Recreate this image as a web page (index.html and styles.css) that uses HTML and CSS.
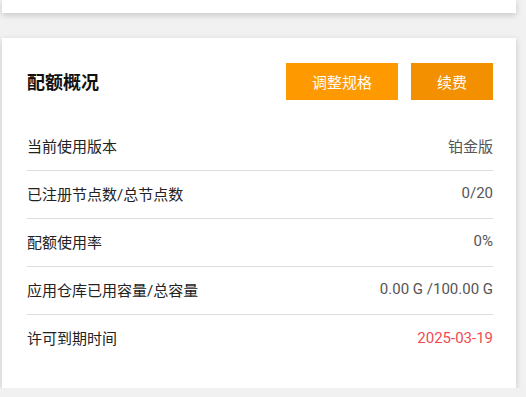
FILE: index.html
```html
<!DOCTYPE html>
<html lang="zh-CN">
<head>
    <meta charset="UTF-8">
    <meta name="viewport" content="width=device-width, initial-scale=1.0">
    <title>配额概况</title>
    <link rel="stylesheet" href="styles.css">
</head>
<body>
    <div class="card card-top"></div>

    <div class="card quota">
        <div class="quota-header">
            <h3>配额概况</h3>
            <div class="actions">
                <button class="btn btn-primary">调整规格</button>
                <button class="btn btn-renew">续费</button>
            </div>
        </div>

        <div class="quota-list">
            <div class="quota-row">
                <span class="label">当前使用版本</span>
                <span class="value">铂金版</span>
            </div>
            <div class="quota-row">
                <span class="label">已注册节点数/总节点数</span>
                <span class="value">0/20</span>
            </div>
            <div class="quota-row">
                <span class="label">配额使用率</span>
                <span class="value">0%</span>
            </div>
            <div class="quota-row">
                <span class="label">应用仓库已用容量/总容量</span>
                <span class="value">0.00 G /100.00 G</span>
            </div>
            <div class="quota-row">
                <span class="label">许可到期时间</span>
                <span class="value expire">2025-03-19</span>
            </div>
        </div>
    </div>
</body>
</html>
```

FILE: styles.css
```css
body {
    margin: 0;
    padding: 0 10px 0 2px;
    background: #f1f1f1;
    font-family: Roboto, "Noto Sans CJK SC", sans-serif;
    font-size: 15px;
    color: #333;
}
.card {
    background: white;
    box-shadow: 0 2px 6px rgba(0,0,0,0.18);
}
.card-top {
    height: 13px;
    margin-bottom: 25px;
}
.quota {
    padding: 25px 23px 25px 25px;
}
.quota-header {
    display: flex;
    align-items: center;
    justify-content: space-between;
    margin-bottom: 23px;
}
.quota-header h3 {
    margin: 0 0 1px;
    font-size: 18px;
    font-weight: bold;
    color: #111;
}
.actions {
    display: flex;
    gap: 13px;
}
.btn {
    height: 37px;
    padding: 0 26px 1px;
    border: none;
    border-radius: 0;
    color: white;
    font-family: inherit;
    font-size: 15px;
    cursor: pointer;
}
.btn-primary { background: #ff9900; width: 112px; }
.btn-renew { background: #f29000; width: 82px; }

.quota-row {
    display: flex;
    align-items: center;
    justify-content: space-between;
    box-sizing: border-box;
    height: 48px;
    padding-bottom: 3px;
    border-bottom: 1px solid #dedede;
}
.quota-row:last-child { border-bottom: none; }
.label { color: #222; }
.value { color: #555; }
.value.expire { color: #f04b55; }
```
